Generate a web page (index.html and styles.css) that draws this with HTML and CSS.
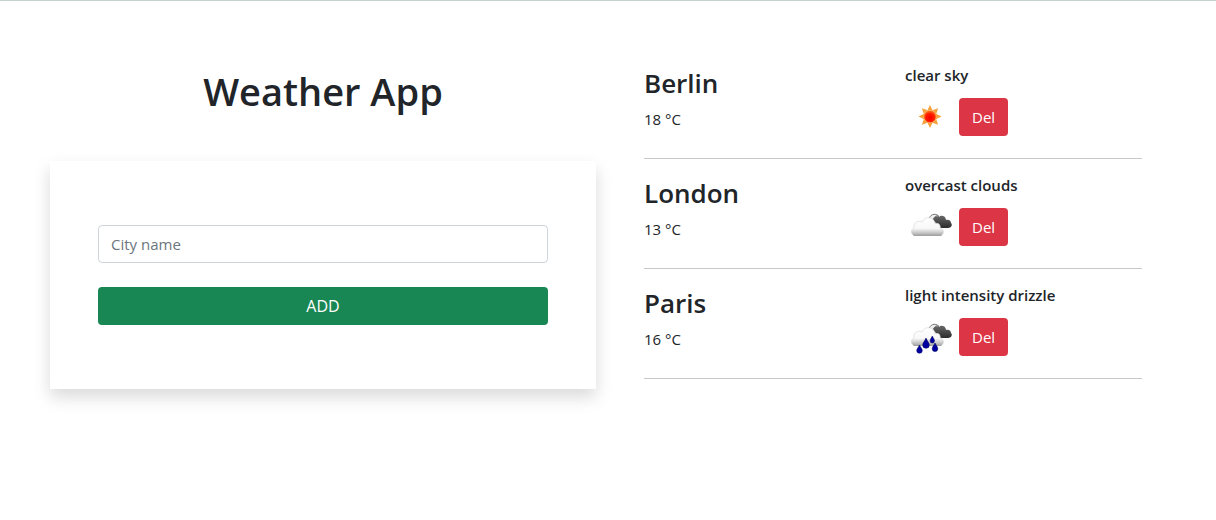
FILE: index.html
```html
<!DOCTYPE html>
<html lang="en">
<head>
<meta charset="utf-8">
<meta name="viewport" content="width=device-width, initial-scale=1">
<title>Weather App</title>
<link rel="stylesheet" href="styles.css">
</head>
<body>
<svg class="defs" width="0" height="0" aria-hidden="true">
  <defs>
    <linearGradient id="white-cloud" x1="0" y1="0" x2="0" y2="1">
      <stop offset="0" stop-color="#fff"/>
      <stop offset=".6" stop-color="#f8f8f8"/>
      <stop offset="1" stop-color="#a8a8a8"/>
    </linearGradient>
    <linearGradient id="dark-cloud" x1="0" y1="0" x2="0" y2="1">
      <stop offset="0" stop-color="#686868"/>
      <stop offset="1" stop-color="#2c2c2c"/>
    </linearGradient>
    <radialGradient id="sun-disc" cx=".5" cy=".6" r=".6">
      <stop offset="0" stop-color="#f80000"/>
      <stop offset=".55" stop-color="#ff1c00"/>
      <stop offset="1" stop-color="#ff8a28"/>
    </radialGradient>
    <g id="clouds">
      <path d="M28 17C28 15 31 13 34 15C36 12.500 41 14 41 18C44 17 46 19 46 21C48 23 46 26 43 26H37C34 25.500 32 24 31 21C30 20 28 19 28 17Z" fill="url(#dark-cloud)"/>
      <path d="M24 18C24 13 30 10 34 14.500C31 13 29 15 28 18" fill="#eee" stroke="#555" stroke-width=".8"/>
      <path d="M10 33.500C5.500 33.500 5.500 27 9 26C8 20 14 18 17 20C20 13 30 15 30 22C33 20 36 23 35 26C40 27 39 33.500 35 33.500Z" fill="url(#white-cloud)" stroke="#d4d4d4" stroke-width=".6"/>
      <path d="M8.500 33.300H36.500" fill="none" stroke="#999" stroke-width="1"/>
    </g>
  </defs>
</svg>
<main class="app">
  <section class="search">
    <h1 class="title">Weather App</h1>
    <form class="card">
      <input class="field" type="text" placeholder="City name" aria-label="City name">
      <button class="btn btn-add" type="button">ADD</button>
    </form>
  </section>
  <ul class="cities">
    <li class="city">
      <div class="place">
        <h2 class="name">Berlin</h2>
        <p class="temp">18 °C</p>
      </div>
      <div class="weather">
        <h3 class="sky">clear sky</h3>
        <div class="actions">
          <svg class="icon" viewBox="0 0 50 50" role="img" aria-label="Sun">
            <g fill="#f5a13c">
              <path id="ray" d="M25 13L27.700 18.500H22.300Z"/>
              <use href="#ray" transform="rotate(45 25 24.500)"/>
              <use href="#ray" transform="rotate(90 25 24.500)"/>
              <use href="#ray" transform="rotate(135 25 24.500)"/>
              <use href="#ray" transform="rotate(180 25 24.500)"/>
              <use href="#ray" transform="rotate(225 25 24.500)"/>
              <use href="#ray" transform="rotate(270 25 24.500)"/>
              <use href="#ray" transform="rotate(315 25 24.500)"/>
            </g>
            <circle cx="25" cy="24.500" r="6.300" fill="url(#sun-disc)" stroke="#ffb870" stroke-width=".6"/>
          </svg>
          <button class="btn btn-del" type="button">Del</button>
        </div>
      </div>
    </li>
    <li class="city">
      <div class="place">
        <h2 class="name">London</h2>
        <p class="temp">13 °C</p>
      </div>
      <div class="weather">
        <h3 class="sky">overcast clouds</h3>
        <div class="actions">
          <svg class="icon" viewBox="0 0 50 50" role="img" aria-label="Clouds"><use href="#clouds"/></svg>
          <button class="btn btn-del" type="button">Del</button>
        </div>
      </div>
    </li>
    <li class="city">
      <div class="place">
        <h2 class="name">Paris</h2>
        <p class="temp">16 °C</p>
      </div>
      <div class="weather">
        <h3 class="sky">light intensity drizzle</h3>
        <div class="actions">
          <svg class="icon" viewBox="0 0 50 50" role="img" aria-label="Drizzle">
            <use href="#clouds"/>
            <g fill="#0000a0" stroke="#000058" stroke-width=".5">
              <path d="M14.500 33C16 36 17.300 37 17.300 38.500A2.800 2.800 0 0 1 11.700 38.500C11.700 37 13 36 14.500 33Z"/>
              <path d="M21 26C22.500 29.500 24.300 31 24.300 33A3.300 3.300 0 0 1 17.700 33C17.700 31 19.500 29.500 21 26Z"/>
              <path d="M27.300 24C28.500 26.500 29.500 27.500 29.500 28.800A2.200 2.200 0 0 1 25.100 28.800C25.100 27.500 26.100 26.500 27.300 24Z"/>
              <path d="M30 31C31.500 34 32.800 35 32.800 36.700A2.800 2.800 0 0 1 27.200 36.700C27.200 35 28.500 34 30 31Z"/>
            </g>
          </svg>
          <button class="btn btn-del" type="button">Del</button>
        </div>
      </div>
    </li>
  </ul>
</main>
</body>
</html>
```
FILE: styles.css
```css
*,
*::before,
*::after {
  box-sizing: border-box;
}

body {
  margin: 0;
  border-top: 1px solid #c5d3cf;
  background: #fff;
  color: #212529;
  font: 15px/24px "Open Sans", "Noto Sans", sans-serif;
}

h1, h2, h3, p, ul {
  margin: 0;
  padding: 0;
}

.defs {
  position: absolute;
}

.app {
  display: grid;
  grid-template-columns: 546fr 498fr;
  gap: 48px;
  padding: 64px 74px 48px 50px;
}

.title {
  margin-bottom: 44px;
  font-size: 38px;
  font-weight: 600;
  line-height: 52px;
  text-align: center;
}

.card {
  display: flex;
  flex-direction: column;
  gap: 24px;
  padding: 64px 48px;
  background: #fff;
  box-shadow: 0 8px 16px rgba(0, 0, 0, 0.15);
}

.field,
.btn {
  height: 38px;
  padding: 0 12px;
  border: 1px solid transparent;
  border-radius: 4px;
  font: inherit;
}

.field {
  width: 100%;
  border-color: #ced4da;
  background: #fff;
  color: #212529;
}

.field::placeholder {
  color: #6c757d;
  opacity: 1;
}

.btn {
  color: #fff;
  cursor: pointer;
}

.btn-add {
  background: #198754;
  font-size: 16px;
}

.btn-del {
  background: #dc3545;
}

.cities {
  display: flex;
  flex-direction: column;
  gap: 16px;
  list-style: none;
}

.city {
  display: grid;
  grid-template-columns: 1fr 1fr;
  gap: 24px;
  padding-bottom: 16px;
  border-bottom: 1px solid #c8c8c8;
}

.name {
  margin-bottom: 6px;
  font-size: 26px;
  font-weight: 600;
  line-height: 36px;
}

.sky {
  font-size: 15px;
  font-weight: 600;
  line-height: 20px;
}

.actions {
  display: flex;
  align-items: center;
  gap: 4px;
  padding-top: 7px;
}

.icon {
  width: 50px;
  height: 50px;
}
```
